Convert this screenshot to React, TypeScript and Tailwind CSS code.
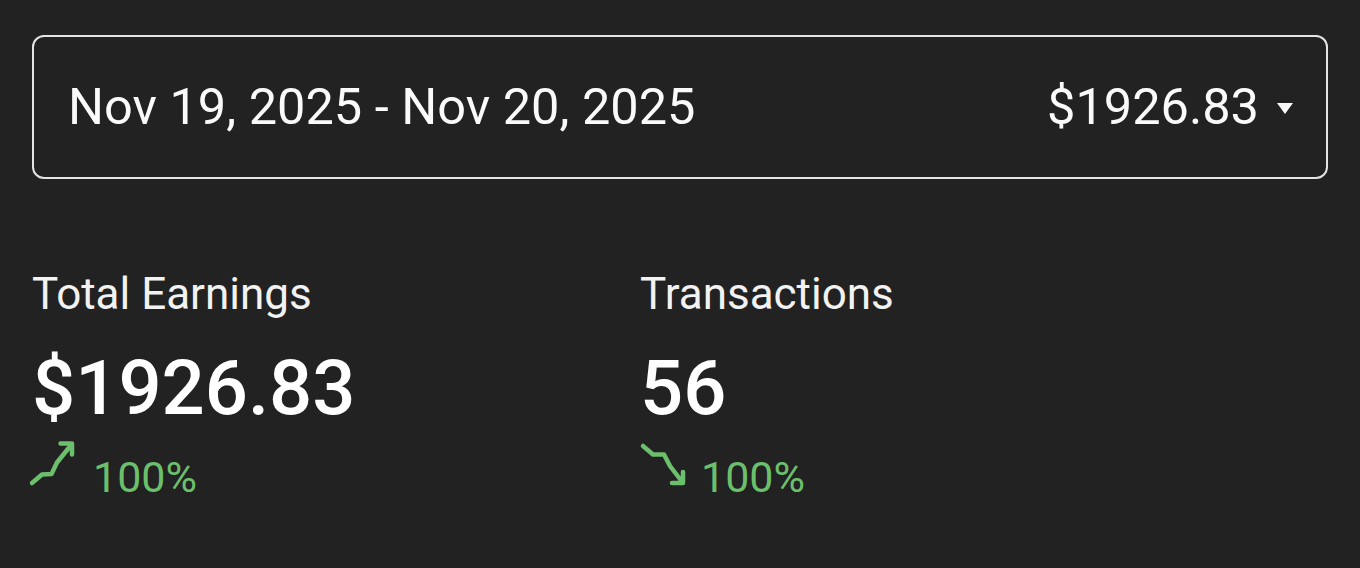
import React from "react";

function UpIcon() {
  return (
    <svg width="56" height="56" viewBox="0 0 56 56" fill="none" stroke="#6cbf6c" strokeWidth="4.5" strokeLinecap="round" strokeLinejoin="round">
      <path d="M5 47 L15 38.5 L24.5 38 L30 26.5 L44.5 8.5" />
      <path d="M33.5 7.5 H45 V18.5" />
    </svg>
  );
}

function DownIcon() {
  return (
    <svg width="56" height="56" viewBox="0 0 56 56" fill="none" stroke="#6cbf6c" strokeWidth="4.5" strokeLinecap="round" strokeLinejoin="round">
      <path d="M8 10 L18 18.5 L29 18.5 L35 30 L46.5 45" />
      <path d="M37 47 H48 V36" />
    </svg>
  );
}

function Stat({ label, value, icon, className }: { label: string; value: string; icon: React.ReactNode; className?: string }) {
  return (
    <div className={className}>
      <div className="text-[44px] leading-none text-[#f2f2f2]">{label}</div>
      <div className="mt-[34px] text-[76px] leading-none font-medium text-white">{value}</div>
      <div className="mt-[10px] flex items-start gap-[10px]">
        <div className="-ml-[5px]">{icon}</div>
        <div className="mt-[20px] text-[43px] leading-none text-[#6cbf6c]">100%</div>
      </div>
    </div>
  );
}

export default function App() {
  return (
    <div
      className="w-[1360px] h-[568px] bg-[#222222] overflow-hidden pl-[32px] pr-[32px] pt-[35px]"
      style={{ fontFamily: "Roboto, 'Noto Sans', Arial, sans-serif" }}
    >
      <div className="h-[144px] rounded-[12px] border-2 border-[#e4e4e4] flex items-center justify-between pl-[34px] pr-[33px]">
        <div className="text-[50.5px] leading-none text-[#fafafa]">Nov 19, 2025 - Nov 20, 2025</div>
        <div className="flex items-center gap-[18px]">
          <div className="text-[50.5px] leading-none text-[#fafafa]">$1926.83</div>
          <svg width="16" height="11" viewBox="0 0 16 11" className="mt-[2px]">
            <path d="M0 0 H16 L8 11 Z" fill="#fafafa" />
          </svg>
        </div>
      </div>
      <div className="mt-[93px] flex">
        <Stat className="w-[608px]" label="Total Earnings" value="$1926.83" icon={<UpIcon />} />
        <Stat className="flex-1" label="Transactions" value="56" icon={<DownIcon />} />
      </div>
    </div>
  );
}
